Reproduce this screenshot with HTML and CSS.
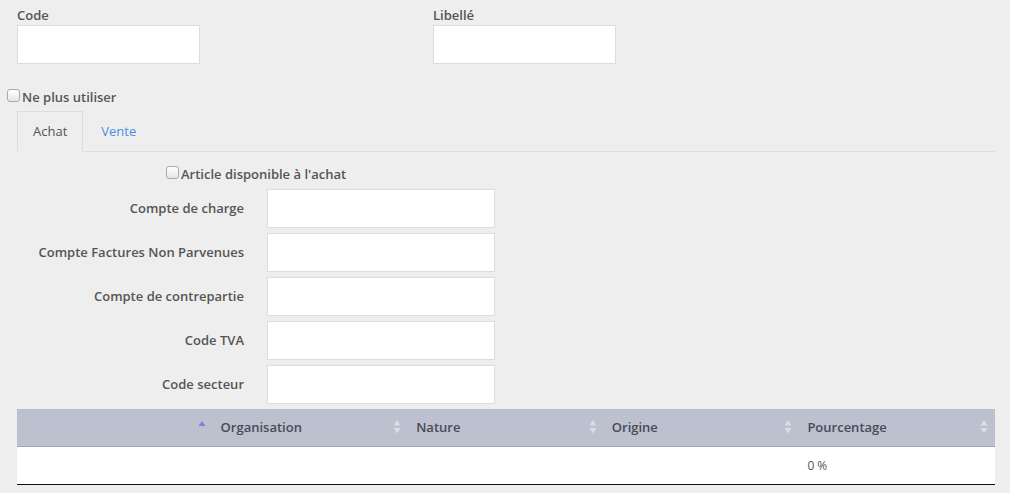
FILE: index.html
```html
<!DOCTYPE html>
<html lang="fr">
<head>
<meta charset="utf-8">
<title>Article</title>
<link rel="stylesheet" href="styles.css">
</head>
<body>
<div class="page">
  <div class="top-fields">
    <div class="field">
      <label class="field-label">Code</label>
      <input class="input input-top" type="text">
    </div>
    <div class="field">
      <label class="field-label">Libellé</label>
      <input class="input input-top" type="text">
    </div>
  </div>

  <label class="check-row check-main">
    <input class="check" type="checkbox">
    <span class="check-text">Ne plus utiliser</span>
  </label>

  <ul class="tabs">
    <li class="tab active"><a class="tab-link">Achat</a></li>
    <li class="tab"><a class="tab-link">Vente</a></li>
  </ul>

  <div class="tab-content">
    <label class="check-row check-achat">
      <input class="check" type="checkbox">
      <span class="check-text">Article disponible à l'achat</span>
    </label>

    <div class="form-rows">
      <div class="form-row"><label class="row-label">Compte de charge</label><input class="input input-row" type="text"></div>
      <div class="form-row"><label class="row-label">Compte Factures Non Parvenues</label><input class="input input-row" type="text"></div>
      <div class="form-row"><label class="row-label">Compte de contrepartie</label><input class="input input-row" type="text"></div>
      <div class="form-row"><label class="row-label">Code TVA</label><input class="input input-row" type="text"></div>
      <div class="form-row"><label class="row-label">Code secteur</label><input class="input input-row" type="text"></div>
    </div>

    <table class="grid">
      <thead>
        <tr>
          <th class="col"><span class="th-text"></span><svg class="sort" width="8" height="16" viewBox="0 0 8 16"><path class="sort-active" d="M0.5 7 L4 2 L7.5 7 Z"/></svg></th>
          <th class="col"><span class="th-text">Organisation</span><svg class="sort" width="8" height="16" viewBox="0 0 8 16"><path class="sort-idle" d="M0.5 6.5 L4 1 L7.5 6.5 Z"/><path class="sort-idle" d="M0.5 9 L4 14.5 L7.5 9 Z"/></svg></th>
          <th class="col"><span class="th-text">Nature</span><svg class="sort" width="8" height="16" viewBox="0 0 8 16"><path class="sort-idle" d="M0.5 6.5 L4 1 L7.5 6.5 Z"/><path class="sort-idle" d="M0.5 9 L4 14.5 L7.5 9 Z"/></svg></th>
          <th class="col"><span class="th-text">Origine</span><svg class="sort" width="8" height="16" viewBox="0 0 8 16"><path class="sort-idle" d="M0.5 6.5 L4 1 L7.5 6.5 Z"/><path class="sort-idle" d="M0.5 9 L4 14.5 L7.5 9 Z"/></svg></th>
          <th class="col"><span class="th-text">Pourcentage</span><svg class="sort" width="8" height="16" viewBox="0 0 8 16"><path class="sort-idle" d="M0.5 6.5 L4 1 L7.5 6.5 Z"/><path class="sort-idle" d="M0.5 9 L4 14.5 L7.5 9 Z"/></svg></th>
        </tr>
      </thead>
      <tbody>
        <tr>
          <td></td>
          <td></td>
          <td></td>
          <td></td>
          <td class="pct">0 %</td>
        </tr>
      </tbody>
    </table>
  </div>
</div>
</body>
</html>
```
FILE: styles.css
```css
html, body {
  margin: 0;
  padding: 0;
  background: #eeeeee;
  height: 100%;
  overflow: hidden;
}
body {
  font-family: "Open Sans", "Liberation Sans", sans-serif;
  font-size: 13px;
  color: #555555;
}
.page {
  padding: 6px 15px 0 17px;
}
.top-fields {
  display: grid;
  grid-template-columns: 416px 416px;
}
.field {
  display: flex;
  flex-direction: column;
  align-items: flex-start;
}
.field-label {
  font-weight: 600;
  line-height: 18px;
  margin-bottom: 1px;
}
.input {
  box-sizing: border-box;
  height: 39px;
  border: 1px solid #dddddd;
  background: #ffffff;
  margin: 0;
  padding: 0 8px;
  font-family: inherit;
  font-size: 13px;
  outline: none;
}
.input-top {
  width: 183px;
}
.input-row {
  width: 228px;
}
.check-row {
  display: flex;
  align-items: center;
  gap: 2px;
  line-height: 18px;
  font-weight: 600;
}
.check-main {
  margin-top: 24px;
  margin-left: -10px;
}
.check {
  appearance: none;
  -webkit-appearance: none;
  box-sizing: border-box;
  width: 13px;
  height: 13px;
  margin: 0 0 3px 0;
  border: 1px solid #a9a9a9;
  border-radius: 3px;
  background: linear-gradient(#ffffff, #e6e6e6);
}
.tabs {
  list-style: none;
  margin: 5px 0 0 0;
  padding: 0;
  display: flex;
  border-bottom: 1px solid #dddddd;
  height: 40px;
}
.tab {
  margin-right: 2px;
}
.tab-link {
  display: block;
  box-sizing: border-box;
  height: 41px;
  padding: 10px 15px;
  line-height: 19px;
  border: 1px solid transparent;
  color: #4a8fdf;
}
.tab.active .tab-link {
  color: #555555;
  border-color: #dddddd;
  border-bottom-color: #eeeeee;
  background: #eeeeee;
}
.tab-content {
  padding-top: 13px;
}
.check-achat {
  margin-left: 149px;
}
.form-rows {
  display: flex;
  flex-direction: column;
  gap: 5px;
  margin-top: 6px;
}
.form-row {
  display: grid;
  grid-template-columns: 227px 228px;
  column-gap: 23px;
  align-items: center;
}
.row-label {
  text-align: right;
  font-weight: 600;
  padding-bottom: 1px;
}
.grid {
  margin-top: 5px;
  width: 978px;
  border-collapse: collapse;
  table-layout: fixed;
}
.grid thead th {
  background: #bcc0cf;
  height: 37px;
  padding: 0 8px;
  box-sizing: border-box;
  border-bottom: 1px solid #9ea3b6;
  text-align: left;
  font-weight: 600;
  color: #474b57;
  position: relative;
}
.th-text {
  display: block;
  line-height: 36px;
}
.sort {
  position: absolute;
  right: 7px;
  top: 10px;
}
.sort-idle {
  fill: #dcdee6;
}
.sort-active {
  fill: #7d7fe0;
}
.grid tbody td {
  background: #ffffff;
  height: 37px;
  padding: 0 8px;
  border-bottom: 1px solid #111111;
  font-size: 12px;
  color: #555555;
}
```
